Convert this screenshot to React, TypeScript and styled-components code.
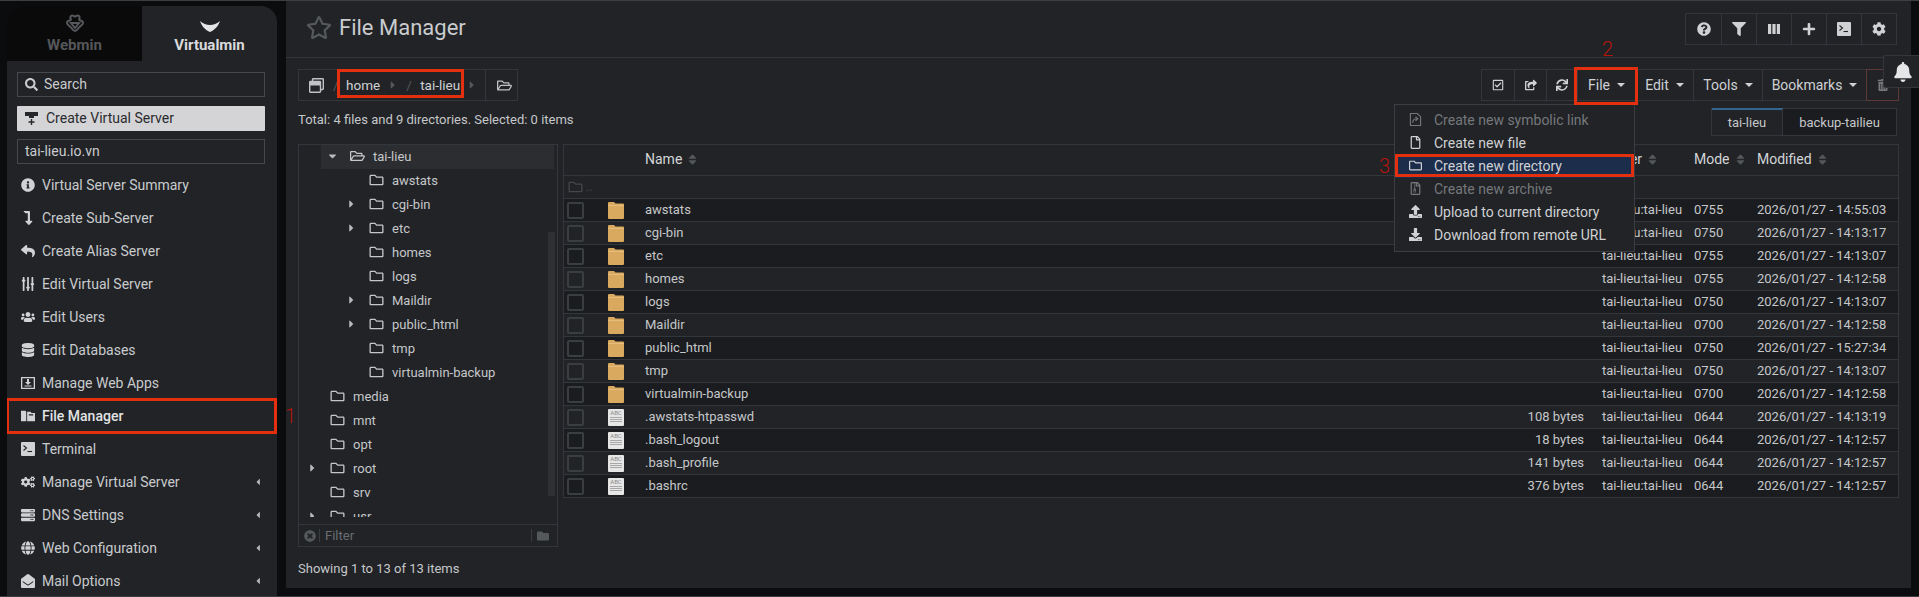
import React from 'react';
import styled, { createGlobalStyle } from 'styled-components';
import {
  FaSearch, FaInfoCircle, FaLevelDownAlt, FaReply, FaSlidersH, FaUsers, FaDatabase, FaCogs, FaServer,
  FaGlobe, FaEnvelopeOpen, FaCaretLeft, FaCaretRight, FaCaretDown, FaRegStar, FaQuestionCircle, FaFilter,
  FaPlus, FaCog, FaRegCheckSquare, FaShareSquare, FaSync, FaTrashAlt, FaBell, FaRegFolder, FaRegFolderOpen,
  FaRegFile, FaUpload, FaDownload, FaRegWindowRestore, FaSort, FaTimesCircle, FaFolder,
  FaRegFileArchive,
} from 'react-icons/fa';

const RED = '#e5300f';

const GlobalStyle = createGlobalStyle`
  html, body { margin: 0; padding: 0; background: #0b0c0d; }
  body { font-family: Roboto, "Liberation Sans", sans-serif; font-size: 13px; color: #cdcfd1; }
  * { box-sizing: border-box; }
`;

const Page = styled.div`
  display: flex;
  width: 1919px;
  height: 597px;
  overflow: hidden;
  position: relative;
  background: #0b0c0d;
  border-top: 1px solid #3c3e40;
  border-bottom: 1px solid #3c3e40;
`;

const Sidebar = styled.aside`
  width: 270px;
  margin: 5px 9px 0 7px;
  background: #212327;
  border-radius: 16px 16px 0 0;
  overflow: hidden;
  flex: none;
`;

const SideTabs = styled.div`
  display: grid;
  grid-template-columns: 135px 135px;
  height: 55px;
`;

const SideTab = styled.div<{ $active?: boolean }>`
  display: flex;
  flex-direction: column;
  align-items: center;
  justify-content: flex-end;
  gap: 4px;
  padding-bottom: 7px;
  height: 55px;
  background: ${p => (p.$active ? 'transparent' : '#0a0a0b')};
  color: ${p => (p.$active ? '#d9dadb' : '#55575a')};
  font-size: 15px;
  font-weight: 700;
  line-height: 18px;
`;

const SideBody = styled.div`
  padding: 11px 12px 0 10px;
  display: flex;
  flex-direction: column;
`;

const SearchBox = styled.div`
  display: flex;
  align-items: center;
  height: 25px;
  border: 1px solid #45484c;
  font-size: 14px;
  color: #c9cbcd;
  padding: 0 0 1px 7px;
  gap: 6px;
  & svg { width: 13px; height: 13px; }
`;

const CreateButton = styled.div`
  display: flex;
  align-items: center;
  height: 25px;
  margin-top: 9px;
  background: #d4d4d6;
  border-radius: 1px;
  font-size: 14px;
  color: #2a2b2e;
  padding: 0 0 2px 8px;
  gap: 7px;
`;

const DomainBox = styled(SearchBox)`
  margin-top: 8px;
`;

const SideList = styled.div`
  margin: 4px -12px 0 -10px;
`;

const SideItem = styled.div<{ $active?: boolean }>`
  position: relative;
  display: flex;
  align-items: center;
  height: 33px;
  padding-left: 13px;
  gap: 6px;
  font-size: 14px;
  color: ${p => (p.$active ? '#e2e3e4' : '#c9cbcd')};
  font-weight: ${p => (p.$active ? 500 : 400)};
`;

const SideIcon = styled.span`
  width: 16px;
  display: flex;
  justify-content: center;
  color: #d0d2d4;
  & svg { width: 14px; height: 14px; }
`;

const VerticalSliders = styled(FaSlidersH)`
  transform: rotate(90deg);
`;

const SideCaret = styled.span`
  margin-left: auto;
  margin-right: 16px;
  display: flex;
  color: #b5b7ba;
  & svg { width: 6px; height: 10px; }
`;

const RedBox = styled.span<{ $inset: string }>`
  position: absolute;
  inset: ${p => p.$inset};
  border: 3px solid ${RED};
  pointer-events: none;
  z-index: 5;
`;

const RedNumber = styled.span<{ $left: number; $top: number }>`
  position: absolute;
  left: ${p => p.$left}px;
  top: ${p => p.$top}px;
  color: #b5160b;
  font-size: 20px;
  font-weight: 300;
  line-height: 22px;
  z-index: 6;
`;

const Main = styled.main`
  width: 1625px;
  height: 587px;
  background: #212327;
  flex: none;
  position: relative;
`;

const TitleBar = styled.header`
  display: flex;
  align-items: center;
  justify-content: space-between;
  height: 57px;
  padding: 0 14px 1px 20px;
  border-bottom: 1px solid #33363a;
`;

const Title = styled.h1`
  display: flex;
  align-items: center;
  gap: 7px;
  margin: 0 0 3px;
  font-size: 22px;
  font-weight: 400;
  color: #c9cbcd;
  & svg { width: 26px; height: 25px; color: #56595c; }
`;

const ButtonGroup = styled.div`
  display: flex;
  height: 32px;
  border: 1px solid #33363a;
`;

const SquareButton = styled.div`
  position: relative;
  display: flex;
  align-items: center;
  justify-content: center;
  width: 35px;
  color: #cfd1d3;
  border-left: 1px solid #33363a;
  &:first-child { border-left: 0; }
  & svg { width: 14px; height: 14px; }
`;

const Body = styled.div`
  padding: 11px 12px 0;
`;

const ToolRow = styled.div`
  display: flex;
  justify-content: space-between;
  height: 32px;
`;

const Crumbs = styled.div`
  display: flex;
  align-items: center;
  width: 220px;
  height: 32px;
  border: 1px solid #33363a;
  font-size: 13.5px;
  color: #cfd1d3;
  position: relative;
  white-space: nowrap;
`;

const CrumbIcon = styled.span<{ $width: number }>`
  display: flex;
  justify-content: center;
  width: ${p => p.$width}px;
  flex: none;
  color: #c0c2c4;
  & svg { width: 15px; height: 15px; }
`;

const CrumbSep = styled.span<{ $width: number; $gap: number }>`
  width: ${p => p.$width}px;
  margin-right: ${p => p.$gap}px;
  flex: none;
  color: #54575a;
  text-align: center;
`;

const CrumbCaret = styled.span<{ $width: number }>`
  display: flex;
  justify-content: center;
  width: ${p => p.$width}px;
  flex: none;
  color: #55585b;
  & svg { width: 8px; height: 12px; }
`;

const CrumbDivider = styled.span`
  width: 1px;
  height: 100%;
  background: #33363a;
  margin-left: 1px;
  flex: none;
`;

const ToolButtons = styled.div`
  display: flex;
  height: 32px;
  border: 1px solid #33363a;
  position: relative;
`;

const ToolButton = styled.div<{ $width: number; $danger?: boolean }>`
  position: relative;
  display: flex;
  align-items: center;
  justify-content: center;
  gap: 7px;
  width: ${p => p.$width}px;
  font-size: 14px;
  color: #cfd1d3;
  border-left: 1px solid #33363a;
  ${p => p.$danger && 'color:#77797b; border: 1px solid #5e3a36; margin: -1px -1px -1px 0;'}
  &:first-child { border-left: 0; }
  & > svg { width: 12px; height: 12px; }
`;

const DropCaret = styled.i`
  width: 0;
  height: 0;
  border-left: 4px solid transparent;
  border-right: 4px solid transparent;
  border-top: 4px solid #cfd1d3;
`;

const Menu = styled.div`
  position: absolute;
  top: 34px;
  left: -184px;
  width: 241px;
  height: 148px;
  padding: 4px 0;
  background: #212327;
  border: 1px solid #3a3d41;
  z-index: 4;
`;

const MenuItem = styled.div<{ $disabled?: boolean; $active?: boolean }>`
  position: relative;
  display: flex;
  align-items: center;
  height: 23px;
  padding: 0 0 2px 14px;
  gap: 12px;
  font-size: 14px;
  color: ${p => (p.$disabled ? '#75787b' : '#cfd1d3')};
  background: ${p => (p.$active ? '#1c2c4b' : 'transparent')};
  & svg { width: 13px; height: 13px; flex: none; }
`;

const InfoRow = styled.div`
  display: flex;
  justify-content: space-between;
  align-items: flex-start;
  height: 29px;
  margin-top: 7px;
`;

const InfoText = styled.div`
  font-size: 13px;
  line-height: 24px;
  color: #c5c7c9;
`;

const FileTabs = styled.div`
  display: flex;
  height: 28px;
  border: 1px solid #33363a;
  border-top: 0;
  margin-right: 2px;
  font-size: 13px;
`;

const FileTab = styled.div<{ $width: number; $active?: boolean }>`
  display: flex;
  align-items: center;
  justify-content: center;
  width: ${p => p.$width}px;
  color: #c5c7c9;
  background: ${p => (p.$active ? 'transparent' : '#1b1c1f')};
  border-top: ${p => (p.$active ? '2px solid #33658f' : '1px solid #33363a')};
  border-right: ${p => (p.$active ? '1px solid #33363a' : '0')};
`;

const Content = styled.div`
  display: flex;
  gap: 5px;
  margin-top: 7px;
`;

const TreePanel = styled.div`
  position: relative;
  width: 260px;
  height: 403px;
  border: 1px solid #33363a;
  flex: none;
`;

const TreeScroll = styled.div`
  height: 372px;
  overflow: hidden;
`;

const TreeRow = styled.div<{ $offset: number; $selected?: boolean }>`
  display: flex;
  align-items: center;
  height: 24px;
  margin-left: ${p => (p.$selected ? 22 : 0)}px;
  margin-right: 3px;
  padding-left: ${p => 5 + p.$offset - (p.$selected ? 22 : 0)}px;
  padding-bottom: 2px;
  font-size: 13px;
  color: #c5c7c9;
  background: ${p => (p.$selected ? '#2b2d31' : 'transparent')};
`;

const TreeCaret = styled.span`
  display: flex;
  width: 26px;
  padding-left: 4px;
  flex: none;
  color: #b9bbbd;
  & svg { width: 9px; height: 12px; }
`;

const TreeFolder = styled.span`
  display: flex;
  width: 23px;
  flex: none;
  color: #c5c7c9;
  & svg { width: 15px; height: 14px; }
`;

const ScrollThumb = styled.div`
  position: absolute;
  right: 2px;
  top: 87px;
  bottom: 50px;
  width: 7px;
  background: #2e3034;
`;

const FilterRow = styled.div`
  position: absolute;
  left: 0;
  right: 0;
  bottom: 0;
  display: flex;
  align-items: center;
  height: 22px;
  border-top: 1px solid #33363a;
  padding-left: 5px;
  font-size: 13px;
  color: #6a6d70;
  & svg { color: #55585b; }
`;

const FilterDivider = styled.span`
  width: 1px;
  height: 13px;
  background: #3a3d40;
  margin: 0 5px 0 3px;
`;

const FilterEnd = styled.span`
  margin-left: auto;
  margin-right: 8px;
  display: flex;
  align-items: center;
`;

const FileTable = styled.div`
  width: 1336px;
  align-self: flex-start;
  border: 1px solid #33363a;
  border-bottom: 0;
`;

const GridRow = styled.div<{ $height?: number; $tone?: 'dark' | 'plain' }>`
  display: grid;
  grid-template-columns: 32px 41px 847px 110px 92px 63px 1fr;
  align-items: center;
  height: ${p => p.$height ?? 23}px;
  border-bottom: 1px solid #33363a;
  background: ${p => (p.$tone === 'dark' ? '#1b1c1f' : 'transparent')};
  font-size: 13px;
  color: #c5c7c9;
`;

const HeadCell = styled.div`
  display: flex;
  align-items: center;
  gap: 6px;
  padding: 0 0 2px 8px;
  font-size: 14px;
  color: #d3d5d7;
  & svg { width: 9px; height: 13px; color: #54575a; }
`;

const Cell = styled.div<{ $right?: boolean }>`
  padding: ${p => (p.$right ? '0 10px 2px 0' : '0 0 2px 8px')};
  text-align: ${p => (p.$right ? 'right' : 'left')};
  white-space: nowrap;
`;

const ParentCell = styled.div`
  grid-column: 1 / 3;
  display: flex;
  align-items: center;
  gap: 3px;
  padding-left: 4px;
  color: #44474a;
  font-size: 12px;
  & svg { width: 15px; height: 14px; }
`;

const CheckBox = styled.span`
  display: block;
  width: 17px;
  height: 17px;
  margin-left: 3px;
  border: 2px solid #3b3e41;
  border-radius: 2px;
`;

const TextThumb = styled.span`
  display: block;
  width: 16px;
  height: 17px;
  background: #e6e6e6;
  border-radius: 1px;
  color: #8a8a8a;
  font-size: 6px;
  line-height: 7px;
  text-align: center;
  position: relative;
  &::after {
    content: '';
    position: absolute;
    left: 2px;
    right: 2px;
    top: 8px;
    height: 6px;
    background: repeating-linear-gradient(#a8a8a8 0 1px, transparent 1px 2px);
  }
`;

const ThumbWrap = styled.div`
  padding-left: 12px;
  display: flex;
`;

const Footer = styled.div`
  margin-top: 14px;
  font-size: 13px;
  line-height: 16px;
  color: #c5c7c9;
`;

const BellTab = styled.div`
  position: absolute;
  right: 0;
  top: 54px;
  width: 36px;
  height: 33px;
  background: #212327;
  border: 1px solid #33363a;
  border-right: 0;
  border-radius: 3px 0 0 3px;
  display: flex;
  align-items: center;
  padding-left: 10px;
  color: #e4e5e6;
  z-index: 7;
  & svg { width: 18px; height: 20px; }
`;

const WebminLogo = () => (
  <svg width="20" height="18" viewBox="0 0 20 18" fill="none" stroke="#55575a" strokeWidth="2">
    <path d="M6 2c1.500-1.500 2.700 0 4 .6C11.300 2 12.500.5 14 2c1.400 1.500 0 3 .2 4 1 .8 4 .5 3.800 3-.2 2-2.500 2.500-4.500 5-1 1.300-2.200 3-3.500 3s-2.500-1.700-3.500-3C4.500 11.500 2.200 11 2 9c-.2-2.500 2.800-2.200 3.800-3C6 5 4.600 3.500 6 2z" />
    <path d="M6 9h8l-4 5z" />
  </svg>
);

const VirtualminLogo = () => (
  <svg width="20" height="11" viewBox="0 0 20 11" fill="#e4e5e6">
    <path d="M0 0c3 2.500 6.500 4 10 4s7-1.500 10-4c-1.500 5-5.500 9-10 11C5.500 9 1.500 5 0 0z" />
  </svg>
);

const CreateIcon = () => (
  <svg width="14" height="14" viewBox="0 0 14 14" fill="#26272a">
    <path d="M0 1h13v4H9v2H4V5H0z" />
    <path d="M5.800 8h1.400v2.300h2.300v1.400H7.200V14H5.800v-2.300H3.500v-1.400h2.300z" />
  </svg>
);

const WebAppsIcon = () => (
  <svg viewBox="0 0 14 14" fill="currentColor">
    <path d="M0 1h14v12H0zm1.300 1.300v9.400h11.400V2.300z" fillRule="evenodd" />
    <path d="M6 3h2v3h2l-3 3-3-3h2zM3.500 9.500h7v1h-7z" />
  </svg>
);

const FileManagerIcon = () => (
  <svg viewBox="0 0 16 14" fill="currentColor">
    <path d="M0 1h5l1 1v11H0zM7 2h4l1 1.500h4V13H7zm2 3v1.500h5V5z" fillRule="evenodd" />
  </svg>
);

const TerminalIcon = () => (
  <svg viewBox="0 0 14 14">
    <rect width="14" height="14" y="0" rx="1" fill="currentColor" />
    <path d="M2.500 3.500L5.500 6l-3 2.500" fill="none" stroke="#212327" strokeWidth="1.100" />
    <path d="M6.500 9.500h4.500" stroke="#212327" strokeWidth="1.100" />
  </svg>
);

const ColumnsIcon = () => (
  <svg viewBox="0 0 14 14" fill="currentColor">
    <path d="M1 2h3.200v10H1zM5.400 2h3.200v10H5.400zM9.800 2H13v10H9.800z" />
  </svg>
);

const SymlinkIcon = () => (
  <svg viewBox="0 0 13 14" fill="none" stroke="currentColor" strokeWidth="1.200">
    <path d="M1 .6h7.500L12 4v9.400H1z" />
    <path d="M3.500 10.500c0-3 1.800-4.300 4-4.300M6.500 4l2.500 2.200-2.500 2.200" />
  </svg>
);

const FolderThumb = () => (
  <svg width="16" height="17" viewBox="0 0 16 17">
    <path d="M1 0h5l1.500 1.500H15a1 1 0 0 1 1 1V16a1 1 0 0 1-1 1H1a1 1 0 0 1-1-1V1a1 1 0 0 1 1-1z" fill="#d9a95f" />
    <path d="M0 3h16v1H0z" fill="#e6bd7c" />
  </svg>
);

const sideItems: { label: string; icon: React.ReactNode; more?: boolean; active?: boolean }[] = [
  { label: 'Virtual Server Summary', icon: <FaInfoCircle /> },
  { label: 'Create Sub-Server', icon: <FaLevelDownAlt /> },
  { label: 'Create Alias Server', icon: <FaReply /> },
  { label: 'Edit Virtual Server', icon: <VerticalSliders /> },
  { label: 'Edit Users', icon: <FaUsers /> },
  { label: 'Edit Databases', icon: <FaDatabase /> },
  { label: 'Manage Web Apps', icon: <WebAppsIcon /> },
  { label: 'File Manager', icon: <FileManagerIcon />, active: true },
  { label: 'Terminal', icon: <TerminalIcon /> },
  { label: 'Manage Virtual Server', icon: <FaCogs />, more: true },
  { label: 'DNS Settings', icon: <FaServer />, more: true },
  { label: 'Web Configuration', icon: <FaGlobe />, more: true },
  { label: 'Mail Options', icon: <FaEnvelopeOpen />, more: true },
];

const treeRows: { name: string; offset: number; caret?: 'right' | 'down'; selected?: boolean }[] = [
  { name: 'tai-lieu', offset: 20, caret: 'down', selected: true },
  { name: 'awstats', offset: 39 },
  { name: 'cgi-bin', offset: 39, caret: 'right' },
  { name: 'etc', offset: 39, caret: 'right' },
  { name: 'homes', offset: 39 },
  { name: 'logs', offset: 39 },
  { name: 'Maildir', offset: 39, caret: 'right' },
  { name: 'public_html', offset: 39, caret: 'right' },
  { name: 'tmp', offset: 39 },
  { name: 'virtualmin-backup', offset: 39 },
  { name: 'media', offset: 0 },
  { name: 'mnt', offset: 0 },
  { name: 'opt', offset: 0 },
  { name: 'root', offset: 0, caret: 'right' },
  { name: 'srv', offset: 0 },
  { name: 'usr', offset: 0, caret: 'right' },
];

const fileRows: { name: string; size?: string; mode: string; modified: string; dir?: boolean }[] = [
  { name: 'awstats', mode: '0755', modified: '2026/01/27 - 14:55:03', dir: true },
  { name: 'cgi-bin', mode: '0750', modified: '2026/01/27 - 14:13:17', dir: true },
  { name: 'etc', mode: '0755', modified: '2026/01/27 - 14:13:07', dir: true },
  { name: 'homes', mode: '0755', modified: '2026/01/27 - 14:12:58', dir: true },
  { name: 'logs', mode: '0750', modified: '2026/01/27 - 14:13:07', dir: true },
  { name: 'Maildir', mode: '0700', modified: '2026/01/27 - 14:12:58', dir: true },
  { name: 'public_html', mode: '0750', modified: '2026/01/27 - 15:27:34', dir: true },
  { name: 'tmp', mode: '0750', modified: '2026/01/27 - 14:13:07', dir: true },
  { name: 'virtualmin-backup', mode: '0700', modified: '2026/01/27 - 14:12:58', dir: true },
  { name: '.awstats-htpasswd', size: '108 bytes', mode: '0644', modified: '2026/01/27 - 14:13:19' },
  { name: '.bash_logout', size: '18 bytes', mode: '0644', modified: '2026/01/27 - 14:12:57' },
  { name: '.bash_profile', size: '141 bytes', mode: '0644', modified: '2026/01/27 - 14:12:57' },
  { name: '.bashrc', size: '376 bytes', mode: '0644', modified: '2026/01/27 - 14:12:57' },
];

const App: React.FC = () => (
  <Page>
    <GlobalStyle />
    <Sidebar>
      <SideTabs>
        <SideTab>
          <WebminLogo />
          Webmin
        </SideTab>
        <SideTab $active>
          <VirtualminLogo />
          Virtualmin
        </SideTab>
      </SideTabs>
      <SideBody>
        <SearchBox>
          <FaSearch />
          Search
        </SearchBox>
        <CreateButton>
          <CreateIcon />
          Create Virtual Server
        </CreateButton>
        <DomainBox>tai-lieu.io.vn</DomainBox>
        <SideList>
          {sideItems.map(item => (
            <SideItem key={item.label} $active={item.active}>
              <SideIcon>{item.icon}</SideIcon>
              {item.label}
              {item.more && (
                <SideCaret>
                  <FaCaretLeft />
                </SideCaret>
              )}
              {item.active && <RedBox $inset="-1px 0 -2px -1px" />}
            </SideItem>
          ))}
        </SideList>
      </SideBody>
    </Sidebar>

    <Main>
      <TitleBar>
        <Title>
          <FaRegStar />
          File Manager
        </Title>
        <ButtonGroup>
          <SquareButton><FaQuestionCircle /></SquareButton>
          <SquareButton><FaFilter /></SquareButton>
          <SquareButton><ColumnsIcon /></SquareButton>
          <SquareButton><FaPlus /></SquareButton>
          <SquareButton><TerminalIcon /></SquareButton>
          <SquareButton><FaCog /></SquareButton>
        </ButtonGroup>
      </TitleBar>
      <Body>
        <ToolRow>
          <Crumbs>
            <CrumbIcon $width={34}><FaRegWindowRestore /></CrumbIcon>
            <CrumbSep $width={3} $gap={10}>/</CrumbSep>
            <span>home</span>
            <CrumbCaret $width={26}><FaCaretRight /></CrumbCaret>
            <CrumbSep $width={6} $gap={8}>/</CrumbSep>
            <span>tai-lieu</span>
            <CrumbCaret $width={24}><FaCaretRight /></CrumbCaret>
            <CrumbDivider />
            <CrumbIcon $width={36}><FaRegFolderOpen /></CrumbIcon>
            <RedBox $inset="-1px 53px 2px 38px" />
          </Crumbs>
          <ToolButtons>
            <ToolButton $width={32}><FaRegCheckSquare /></ToolButton>
            <ToolButton $width={32}><FaShareSquare /></ToolButton>
            <ToolButton $width={31}><FaSync /></ToolButton>
            <ToolButton $width={58}>
              File <DropCaret />
              <RedBox $inset="-3px -3px -5px -4px" />
              <RedNumber $left={24} $top={-32}>2</RedNumber>
              <Menu>
                <MenuItem $disabled><SymlinkIcon />Create new symbolic link</MenuItem>
                <MenuItem><FaRegFile />Create new file</MenuItem>
                <MenuItem $active>
                  <FaRegFolder />Create new directory
                  <RedBox $inset="-1px 0 1px 0" />
                  <RedNumber $left={-16} $top={0}>3</RedNumber>
                </MenuItem>
                <MenuItem $disabled><FaRegFileArchive />Create new archive</MenuItem>
                <MenuItem><FaUpload />Upload to current directory</MenuItem>
                <MenuItem><FaDownload />Download from remote URL</MenuItem>
              </Menu>
            </ToolButton>
            <ToolButton $width={58}>Edit <DropCaret /></ToolButton>
            <ToolButton $width={69}>Tools <DropCaret /></ToolButton>
            <ToolButton $width={104}>Bookmarks <DropCaret /></ToolButton>
            <ToolButton $width={33} $danger><FaTrashAlt /></ToolButton>
          </ToolButtons>
        </ToolRow>
        <InfoRow>
          <InfoText>Total: 4 files and 9 directories. Selected: 0 items</InfoText>
          <FileTabs>
            <FileTab $width={71} $active>tai-lieu</FileTab>
            <FileTab $width={113}>backup-tailieu</FileTab>
          </FileTabs>
        </InfoRow>
        <Content>
          <TreePanel>
            <TreeScroll>
              {treeRows.map(row => (
                <TreeRow key={row.name} $offset={row.offset} $selected={row.selected}>
                  <TreeCaret>
                    {row.caret === 'right' && <FaCaretRight />}
                    {row.caret === 'down' && <FaCaretDown />}
                  </TreeCaret>
                  <TreeFolder>{row.selected ? <FaRegFolderOpen /> : <FaRegFolder />}</TreeFolder>
                  {row.name}
                </TreeRow>
              ))}
            </TreeScroll>
            <ScrollThumb />
            <FilterRow>
              <FaTimesCircle size={12} />
              <FilterDivider />
              Filter
              <FilterEnd>
                <FilterDivider />
                <FaFolder size={12} />
              </FilterEnd>
            </FilterRow>
          </TreePanel>
          <FileTable>
            <GridRow $height={31}>
              <span />
              <span />
              <HeadCell>Name <FaSort /></HeadCell>
              <span />
              <HeadCell>Owner <FaSort /></HeadCell>
              <HeadCell>Mode <FaSort /></HeadCell>
              <HeadCell>Modified <FaSort /></HeadCell>
            </GridRow>
            <GridRow>
              <ParentCell><FaRegFolder />..</ParentCell>
            </GridRow>
            {fileRows.map((row, index) => (
              <GridRow key={row.name} $tone={index % 2 === 0 ? 'dark' : 'plain'}>
                <CheckBox />
                <ThumbWrap>{row.dir ? <FolderThumb /> : <TextThumb>ABC</TextThumb>}</ThumbWrap>
                <Cell>{row.name}</Cell>
                <Cell $right>{row.size}</Cell>
                <Cell>tai-lieu:tai-lieu</Cell>
                <Cell>{row.mode}</Cell>
                <Cell>{row.modified}</Cell>
              </GridRow>
            ))}
          </FileTable>
        </Content>
        <Footer>Showing 1 to 13 of 13 items</Footer>
      </Body>
    </Main>
    <RedNumber $left={285} $top={404}>1</RedNumber>
    <BellTab><FaBell /></BellTab>
  </Page>
);

export default App;
